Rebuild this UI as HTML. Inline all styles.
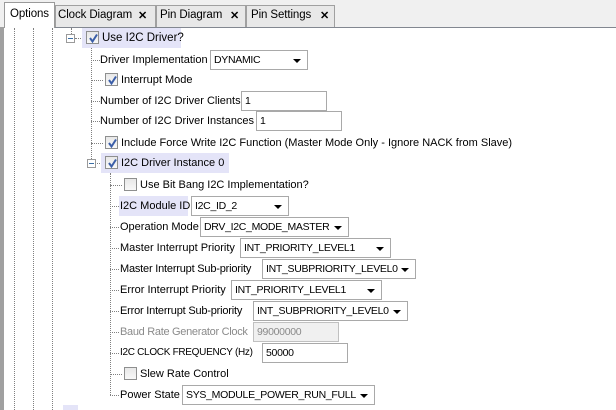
<!DOCTYPE html><html><head><style>
body{margin:0;width:616px;height:410px;overflow:hidden;background:#fff;font-family:"Liberation Sans",sans-serif;font-size:11px;color:#000;position:relative}
.a{position:absolute;white-space:nowrap}
.t{line-height:20px;height:20px}
.cb{position:absolute;width:11px;height:11px;border:1px solid #8e8f8f;background:linear-gradient(#e8e8e8,#f8f8f8)}
.cb svg{position:absolute;left:1px;top:1px}
.sel,.inp{position:absolute;border:1px solid #a9a9a9;background:#fff;line-height:18px;padding-left:3px;box-sizing:border-box;height:20px;font-size:10.5px;letter-spacing:-0.3px;white-space:nowrap;overflow:hidden}
.sel:after{content:"";position:absolute;right:6px;top:8px;border-left:4px solid transparent;border-right:4px solid transparent;border-top:4px solid #000}
.vd{position:absolute;border-left:1px dotted #808080;width:0}
.hd{position:absolute;border-top:1px dotted #808080;height:0}
.hl{position:absolute;background:#e4e4f8}
.exp{position:absolute;width:7px;height:7px;border:1px solid #9a9a9a;background:#fff}
.exp:after{content:"";position:absolute;left:1px;top:3px;width:5px;height:1px;background:#3a6ea5}
.tab{font-size:11.5px;letter-spacing:-0.1px}
.x{font-size:11px;font-weight:bold}
</style></head><body>
<div class="a" style="left:0;top:0;width:616px;height:27px;background:#f0f0f0"></div>
<div class="a" style="left:0;top:27px;width:616px;height:1px;background:#828790"></div>
<div class="a" style="left:0;top:27px;width:4px;height:383px;background:#a0a0a0"></div>
<div class="a" style="left:4px;top:2px;width:49px;height:25px;background:#fff;border:1px solid #9a9a9a;border-bottom:none"></div>
<div class="a tab" style="left:10px;top:8px">Options</div>
<div class="a" style="left:55px;top:5px;width:99px;height:21px;background:#e8e8e8;border:1px solid #a0a0a0;border-bottom:none"></div>
<div class="a tab" style="left:58px;top:9px">Clock Diagram</div><div class="a x" style="left:138px;top:9px">✕</div>
<div class="a" style="left:156px;top:5px;width:88px;height:21px;background:#e8e8e8;border:1px solid #a0a0a0;border-bottom:none"></div>
<div class="a tab" style="left:160px;top:9px">Pin Diagram</div><div class="a x" style="left:230px;top:9px">✕</div>
<div class="a" style="left:246px;top:5px;width:87px;height:21px;background:#e8e8e8;border:1px solid #a0a0a0;border-bottom:none"></div>
<div class="a tab" style="left:251px;top:9px">Pin Settings</div><div class="a x" style="left:320px;top:9px">✕</div>

<div class="vd" style="left:14px;top:28px;height:382px"></div>
<div class="vd" style="left:33px;top:28px;height:382px"></div>
<div class="vd" style="left:52px;top:28px;height:382px"></div>
<div class="vd" style="left:71px;top:28px;height:6px"></div>
<div class="hd" style="left:75px;top:38px;width:8px"></div>
<div class="vd" style="left:91px;top:48px;height:115px"></div>
<div class="hd" style="left:91px;top:60px;width:9px"></div>
<div class="hd" style="left:91px;top:80px;width:12px"></div>
<div class="hd" style="left:91px;top:101px;width:9px"></div>
<div class="hd" style="left:91px;top:121px;width:9px"></div>
<div class="hd" style="left:91px;top:143px;width:12px"></div>
<div class="vd" style="left:110px;top:173px;height:222px"></div>
<div class="hd" style="left:110px;top:185px;width:12px"></div>
<div class="hd" style="left:110px;top:206px;width:9px"></div>
<div class="hd" style="left:110px;top:227px;width:9px"></div>
<div class="hd" style="left:110px;top:248px;width:9px"></div>
<div class="hd" style="left:110px;top:269px;width:9px"></div>
<div class="hd" style="left:110px;top:290px;width:9px"></div>
<div class="hd" style="left:110px;top:311px;width:9px"></div>
<div class="hd" style="left:110px;top:332px;width:9px"></div>
<div class="hd" style="left:110px;top:353px;width:9px"></div>
<div class="hd" style="left:110px;top:374px;width:12px"></div>
<div class="hd" style="left:110px;top:395px;width:9px"></div>

<div class="hl" style="left:82px;top:28px;width:99px;height:20px"></div>
<div class="exp" style="left:66px;top:34px"></div>
<div class="cb" style="left:86px;top:31px"><svg width="11" height="11"><path d="M2 5 L4.5 8.5 L9 1.5" stroke="#3b5ea8" stroke-width="2" fill="none"/></svg></div>
<div class="a t" style="left:102px;top:28px;font-size:11.5px">Use I2C Driver?</div>

<div class="a t" style="left:100px;top:50px">Driver Implementation</div>
<div class="sel" style="left:210px;top:50px;width:98px">DYNAMIC</div>
<div class="cb" style="left:105px;top:73px"><svg width="11" height="11"><path d="M2 5 L4.5 8.5 L9 1.5" stroke="#3b5ea8" stroke-width="2" fill="none"/></svg></div>
<div class="a t" style="left:121px;top:70px">Interrupt Mode</div>
<div class="a t" style="left:100px;top:91px">Number of I2C Driver Clients</div>
<div class="inp" style="left:241px;top:91px;width:86px">1</div>
<div class="a t" style="left:100px;top:111px">Number of I2C Driver Instances</div>
<div class="inp" style="left:256px;top:111px;width:86px">1</div>
<div class="cb" style="left:105px;top:136px"><svg width="11" height="11"><path d="M2 5 L4.5 8.5 L9 1.5" stroke="#3b5ea8" stroke-width="2" fill="none"/></svg></div>
<div class="a t" style="left:121px;top:133px">Include Force Write I2C Function (Master Mode Only - Ignore NACK from Slave)</div>

<div class="hd" style="left:97px;top:163px;width:5px"></div>
<div class="hl" style="left:101px;top:153px;width:128px;height:20px"></div>
<div class="exp" style="left:87px;top:159px"></div>
<div class="cb" style="left:105px;top:156px"><svg width="11" height="11"><path d="M2 5 L4.5 8.5 L9 1.5" stroke="#3b5ea8" stroke-width="2" fill="none"/></svg></div>
<div class="a t" style="left:121px;top:153px">I2C Driver Instance 0</div>

<div class="cb" style="left:124px;top:178px"></div>
<div class="a t" style="left:140px;top:175px">Use Bit Bang I2C Implementation?</div>
<div class="hl" style="left:119px;top:196px;width:69px;height:20px"></div>
<div class="a t" style="left:120px;top:196px">I2C Module ID</div>
<div class="sel" style="left:191px;top:196px;width:98px">I2C_ID_2</div>
<div class="a t" style="left:120px;top:217px">Operation Mode</div>
<div class="sel" style="left:200px;top:217px;width:149px">DRV_I2C_MODE_MASTER</div>
<div class="a t" style="left:120px;top:238px">Master Interrupt Priority</div>
<div class="sel" style="left:240px;top:238px;width:151px">INT_PRIORITY_LEVEL1</div>
<div class="a t" style="left:120px;top:259px;letter-spacing:-0.2px">Master Interrupt Sub-priority</div>
<div class="sel" style="left:262px;top:259px;width:154px">INT_SUBPRIORITY_LEVEL0</div>
<div class="a t" style="left:120px;top:280px">Error Interrupt Priority</div>
<div class="sel" style="left:231px;top:280px;width:151px">INT_PRIORITY_LEVEL1</div>
<div class="a t" style="left:120px;top:301px;letter-spacing:-0.2px">Error Interrupt Sub-priority</div>
<div class="sel" style="left:253px;top:301px;width:155px">INT_SUBPRIORITY_LEVEL0</div>
<div class="a t" style="left:120px;top:322px;color:#8a8a8a;letter-spacing:-0.3px">Baud Rate Generator Clock</div>
<div class="inp" style="left:253px;top:322px;width:86px;background:#f0f0f0;color:#8a8a8a;border-color:#c0c0c0">99000000</div>
<div class="a t" style="left:120px;top:343px;font-size:10px;letter-spacing:-0.3px">I2C CLOCK FREQUENCY (Hz)</div>
<div class="inp" style="left:262px;top:343px;width:86px">50000</div>
<div class="cb" style="left:124px;top:367px"></div>
<div class="a t" style="left:140px;top:364px">Slew Rate Control</div>
<div class="a t" style="left:120px;top:385px">Power State</div>
<div class="sel" style="left:182px;top:385px;width:193px">SYS_MODULE_POWER_RUN_FULL</div>
<div class="hl" style="left:63px;top:405px;width:15px;height:5px"></div>
</body></html>
